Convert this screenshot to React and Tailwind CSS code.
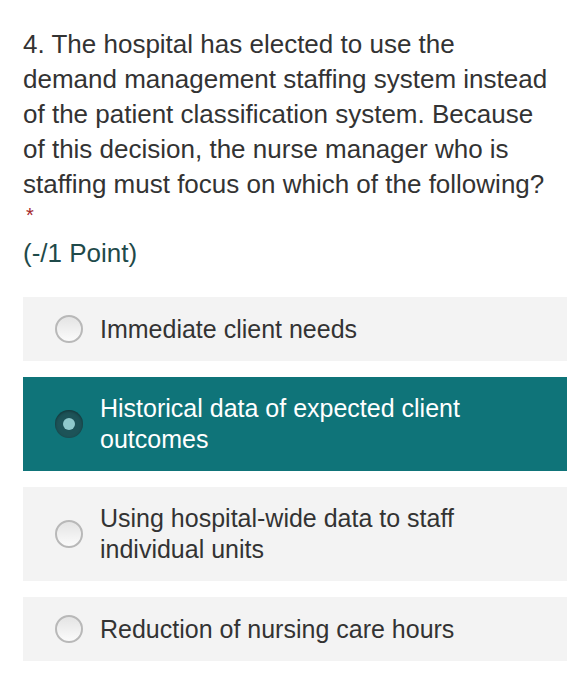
import React, { useState } from 'react';

const options = [
  'Immediate client needs',
  'Historical data of expected client outcomes',
  'Using hospital-wide data to staff individual units',
  'Reduction of nursing care hours',
];

const Radio = ({ checked }) =>
  checked ? (
    <span className="flex h-[28px] w-[28px] shrink-0 items-center justify-center rounded-full bg-[#1d5358] shadow-[inset_0_1px_3px_rgba(0,0,0,0.4)]">
      <span className="h-[12px] w-[12px] rounded-full bg-[#8fc9cc]" />
    </span>
  ) : (
    <span className="h-[28px] w-[28px] shrink-0 rounded-full border-2 border-[#b8b8b8] bg-gradient-to-b from-[#e4e4e4] to-[#fbfbfb]" />
  );

export default function App() {
  const [selected, setSelected] = useState(1);

  return (
    <div className="min-h-[699px] w-[574px] bg-white px-[23px] pt-[27px] font-['Liberation_Sans',Arial,sans-serif]">
      <p className="text-[26px] leading-[35px] text-[#333333]">
        4. The hospital has elected to use the
        <br />
        demand management staffing system instead
        <br />
        of the patient classification system. Because
        <br />
        of this decision, the nurse manager who is
        <br />
        staffing must focus on which of the following?
      </p>
      <div className="mt-[1px] pl-[3px] text-[20px] leading-[24px] text-[#a4262c]">*</div>
      <div className="mt-[10px] text-[26px] leading-[32px] text-[#1f4a4a]">(-/1 Point)</div>

      <div className="mt-[28px] flex w-[544px] flex-col gap-[16px]">
        {options.map((opt, i) => {
          const on = selected === i;
          const multi = opt.length > 34;
          return (
            <button
              key={opt}
              onClick={() => setSelected(i)}
              className={`flex items-center gap-[17px] pl-[32px] pr-[30px] text-left ${
                multi ? 'py-[16px]' : 'h-[64px]'
              } ${on ? 'bg-[#0f7479] text-white' : 'bg-[#f3f3f3] text-[#333333]'}`}
            >
              <Radio checked={on} />
              <span className="text-[25px] leading-[31px]">{opt}</span>
            </button>
          );
        })}
      </div>
    </div>
  );
}
